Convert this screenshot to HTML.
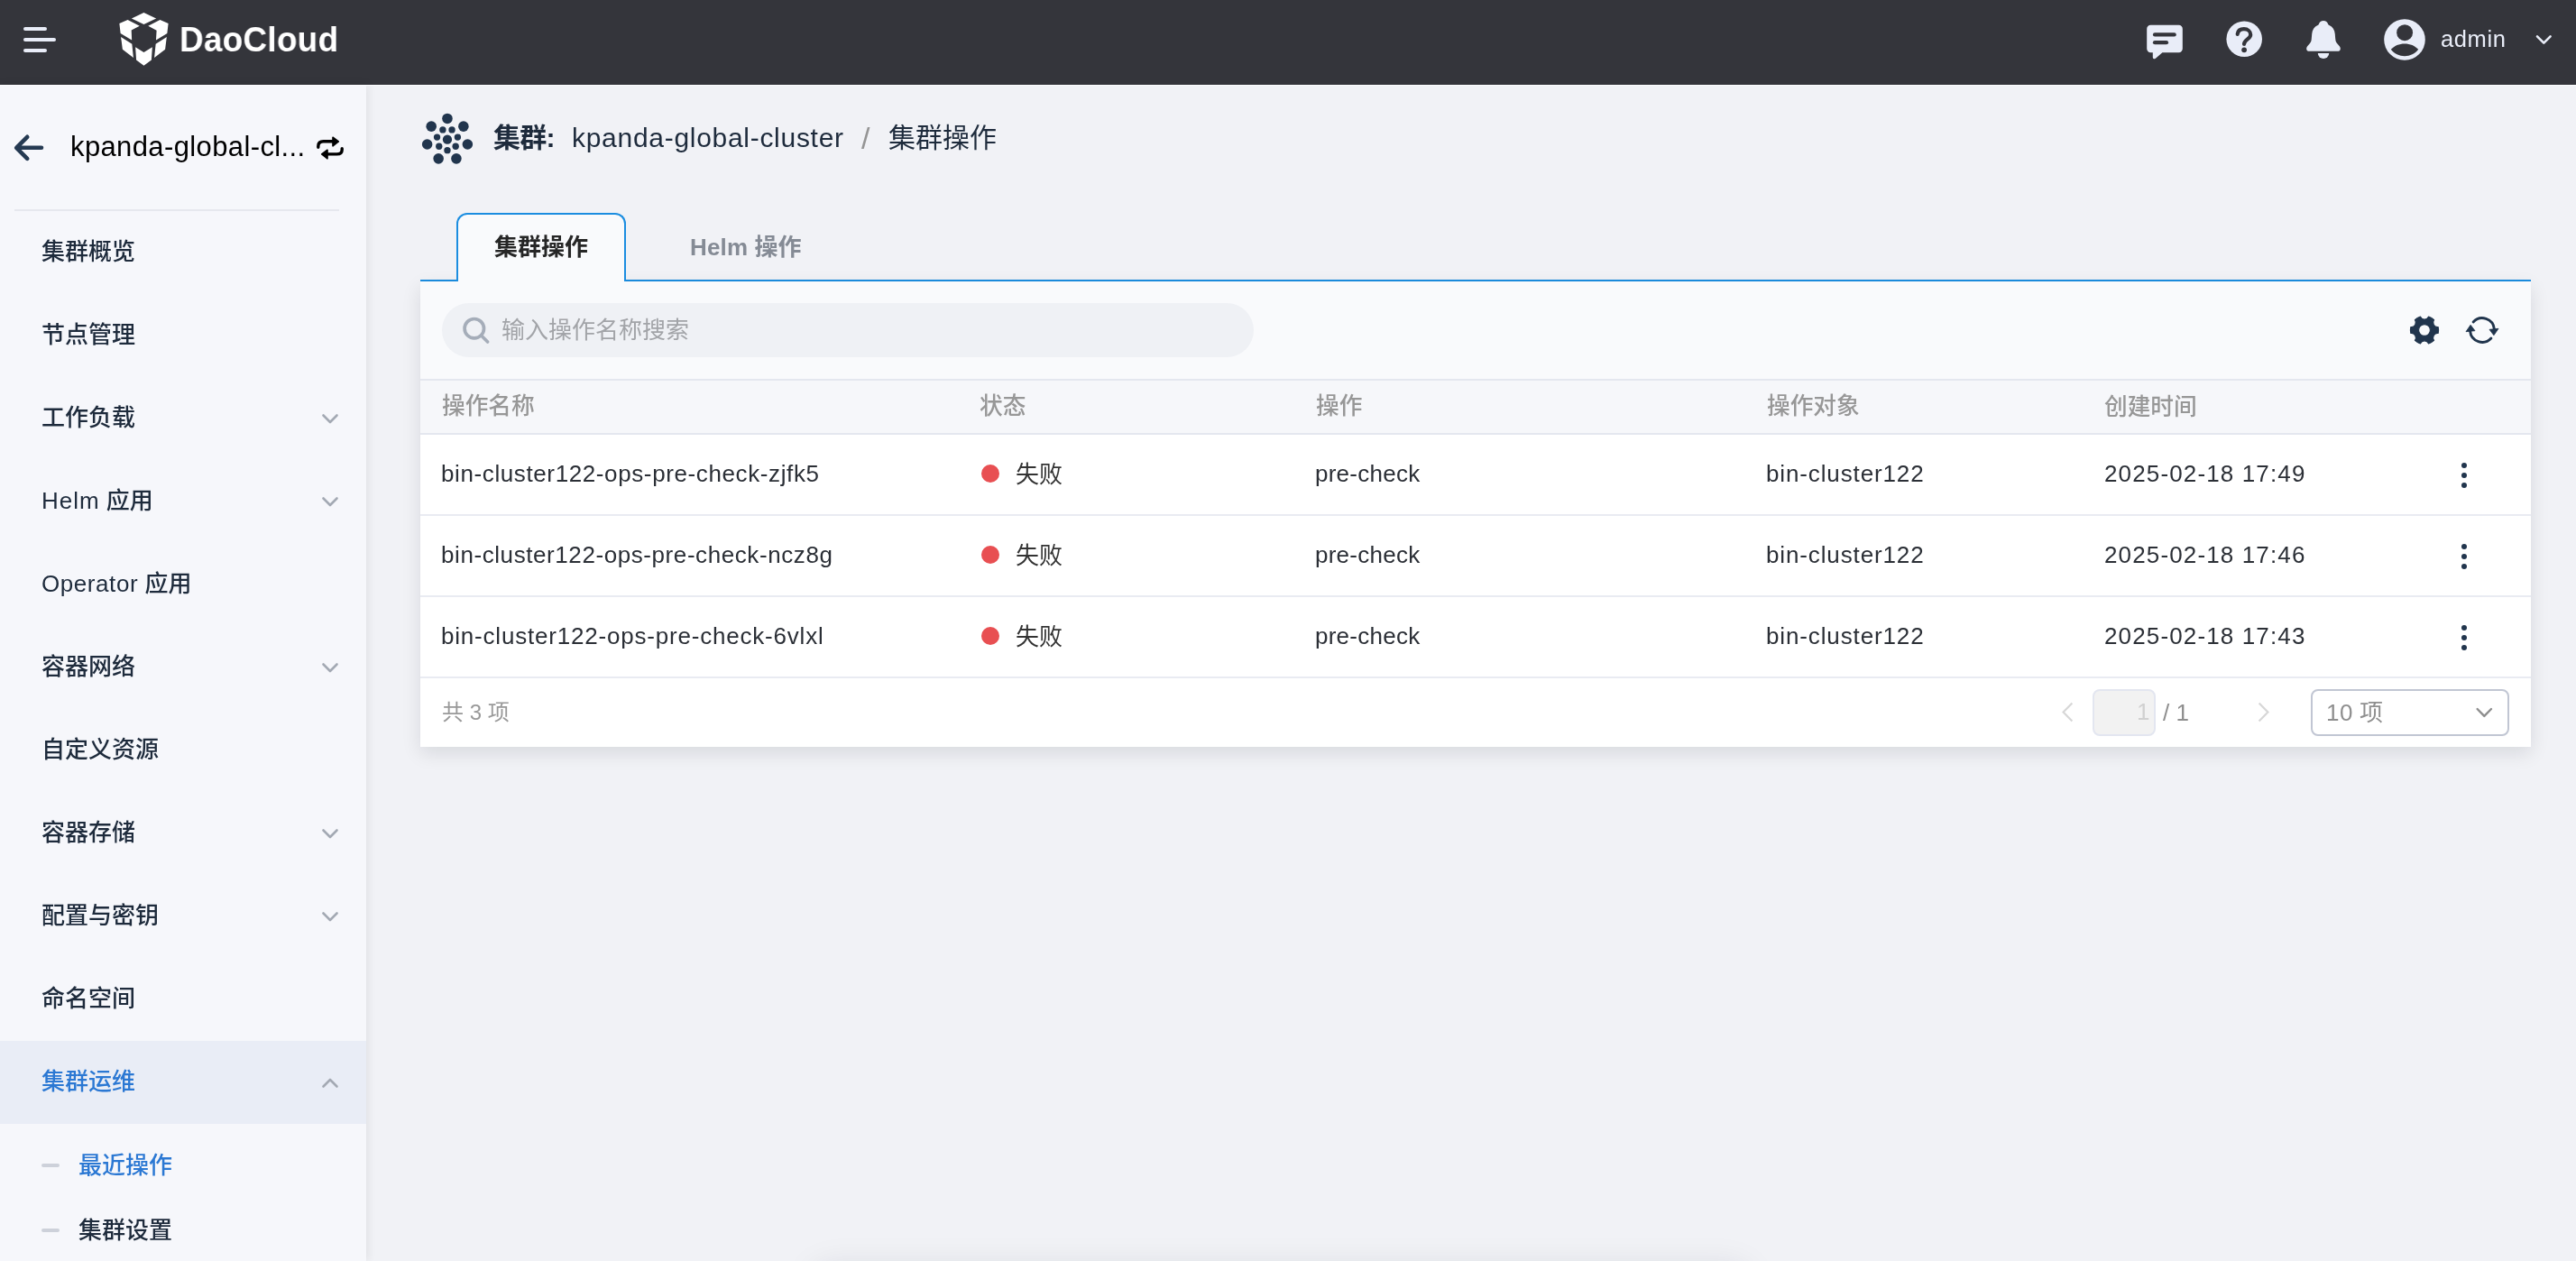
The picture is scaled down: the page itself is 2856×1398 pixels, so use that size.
<!DOCTYPE html>
<html lang="zh-CN">
<head>
<meta charset="utf-8">
<title>集群操作 - DaoCloud</title>
<style>
*{box-sizing:border-box;margin:0;padding:0}
html,body{width:2856px;height:1398px;overflow:hidden}
body{position:relative;background:#f1f2f6;font-family:"Liberation Sans","Noto Sans CJK SC",sans-serif;color:#1e2b3c}
.abs{position:absolute}
svg{display:block;overflow:visible}
.t{position:absolute;white-space:nowrap;line-height:40px;height:40px;will-change:transform}
#hdr{position:absolute;left:0;top:0;width:2856px;height:94px;background:#34353b}
#hl{position:absolute;left:0;top:94px;width:2856px;height:1.2px;background:#fcfcfe}
.bar{position:absolute;height:4.4px;border-radius:2.2px;background:#e9edf8;left:26px}
#side{position:absolute;left:0;top:94px;width:406px;height:1304px;background:#f6f7fb;box-shadow:1px 0 10px rgba(0,0,0,.09)}
#sdiv{position:absolute;left:16px;top:232px;width:360px;height:2px;background:#e6e8ee}
#act{position:absolute;left:0;top:1154px;width:406px;height:92px;background:#e9edf6}
.dash{position:absolute;left:46px;width:20px;height:4.4px;border-radius:2.2px;background:#cdd1da}
#card{position:absolute;left:466px;top:312px;width:2340px;height:516px;background:#fff;box-shadow:0 7px 20px rgba(10,15,30,.11)}
#bsh{position:absolute;left:900px;top:1404px;width:1040px;height:40px;border-radius:20px;box-shadow:0 0 36px rgba(20,30,50,.10)}
#tabline{position:absolute;left:466px;top:310px;width:2340px;height:2px;background:#1b8de0}
#tab1b{position:absolute;left:506px;top:236px;width:188px;height:76px;border:2px solid #1b8de0;border-bottom:none;border-radius:12px 12px 0 0;background:#f9fafc}
#tool{position:absolute;left:0;top:0;width:2340px;height:110px;background:#f9fafc;border-bottom:2px solid #e4e7ef}
#search{position:absolute;left:24px;top:24px;width:900px;height:60px;border-radius:30px;background:#eff1f5}
#thead{position:absolute;left:0;top:110px;width:2340px;height:60px;background:#f6f7fa;border-bottom:2px solid #e4e7ef}
.tr{position:absolute;left:0;width:2340px;height:90px;border-bottom:2px solid #e9ebf2;background:#fff}
.dot{position:absolute;left:621.8px;width:20.4px;height:20.4px;border-radius:50%;background:#e84f52}
#pgin{position:absolute;left:2320px;top:764px;width:70px;height:52px;border:2px solid #e3e6f0;border-radius:8px;background:#f2f2f2}
#selb{position:absolute;left:2562px;top:764px;width:220px;height:52px;border:2px solid #c1c6d3;border-radius:8px;background:#fff}
#brand{left:198.60px;top:24.00px;font-size:39px;font-weight:700;color:#fff;letter-spacing:0.31px;transform:scaleX(.945);transform-origin:0 50%}
#admin{left:2706.00px;top:23.15px;font-size:25.5px;font-weight:400;color:#e9edf8;letter-spacing:0.63px;}
#cname{left:77.50px;top:142.60px;font-size:31px;font-weight:400;color:#000;letter-spacing:0.38px;}
#m0{left:46.00px;top:259.20px;font-size:26px;font-weight:500;color:#1e2b3c;}
#m1{left:46.00px;top:351.20px;font-size:26px;font-weight:500;color:#1e2b3c;}
#m2{left:46.00px;top:443.20px;font-size:26px;font-weight:500;color:#1e2b3c;}
#m3{left:46.00px;top:535.20px;font-size:26px;font-weight:500;color:#1e2b3c;}
#m3 .ls{letter-spacing:0.97px}
#m4{left:46.00px;top:627.20px;font-size:26px;font-weight:500;color:#1e2b3c;}
#m4 .ls{letter-spacing:0.57px}
#m5{left:46.00px;top:719.20px;font-size:26px;font-weight:500;color:#1e2b3c;}
#m6{left:46.00px;top:811.20px;font-size:26px;font-weight:500;color:#1e2b3c;}
#m7{left:46.00px;top:903.20px;font-size:26px;font-weight:500;color:#1e2b3c;}
#m8{left:46.00px;top:995.20px;font-size:26px;font-weight:500;color:#1e2b3c;}
#m9{left:46.00px;top:1087.20px;font-size:26px;font-weight:500;color:#1e2b3c;}
#m10{left:46.00px;top:1179.20px;font-size:26px;font-weight:500;color:#2b78d3;}
#s1{left:86.50px;top:1272.30px;font-size:26px;font-weight:500;color:#2b78d3;}
#s2{left:86.50px;top:1344.15px;font-size:26px;font-weight:500;color:#1e2b3c;}
#bc1{left:546.50px;top:133.20px;font-size:30px;font-weight:700;color:#1e2b3c;letter-spacing:-0.72px;}
#bc2{left:634.00px;top:132.60px;font-size:30px;font-weight:400;color:#1e2b3c;letter-spacing:0.71px;}
#bc3{left:955.00px;top:132.70px;font-size:34px;font-weight:400;color:#959595;}
#bc4{left:985.00px;top:133.20px;font-size:30px;font-weight:400;color:#1e2b3c;}
#tab1{left:548.40px;top:253.70px;font-size:26px;font-weight:700;color:#262626;}
#tab2{left:765.20px;top:253.70px;font-size:26px;font-weight:700;color:#858b95;}
#tab2 .ls{letter-spacing:0.18px}
#ph{left:556.00px;top:346.30px;font-size:26px;font-weight:400;color:#a2a4a8;}
#th0{left:490.30px;top:430.45px;font-size:25.7px;font-weight:500;color:#979797;}
#th1{left:1086.10px;top:430.45px;font-size:25.7px;font-weight:500;color:#979797;}
#th2{left:1459.00px;top:430.45px;font-size:25.7px;font-weight:500;color:#979797;}
#th3{left:1959.00px;top:430.45px;font-size:25.7px;font-weight:500;color:#979797;}
#th4{left:2333.00px;top:430.95px;font-size:25.7px;font-weight:500;color:#979797;}
#n0{left:488.70px;top:505.10px;font-size:26px;font-weight:400;color:#2b2f36;letter-spacing:0.61px;}
#st0{left:1125.70px;top:505.90px;font-size:26px;font-weight:400;color:#333;}
#op0{left:1458.40px;top:505.10px;font-size:26px;font-weight:400;color:#2b2f36;letter-spacing:0.25px;}
#ob0{left:1958.40px;top:505.05px;font-size:26px;font-weight:400;color:#2b2f36;letter-spacing:0.87px;}
#dt0{left:2333.00px;top:505.00px;font-size:26px;font-weight:400;color:#2b2f36;letter-spacing:1.14px;}
#n1{left:488.70px;top:595.10px;font-size:26px;font-weight:400;color:#2b2f36;letter-spacing:0.58px;}
#st1{left:1125.70px;top:595.90px;font-size:26px;font-weight:400;color:#333;}
#op1{left:1458.40px;top:595.10px;font-size:26px;font-weight:400;color:#2b2f36;letter-spacing:0.25px;}
#ob1{left:1958.40px;top:595.05px;font-size:26px;font-weight:400;color:#2b2f36;letter-spacing:0.87px;}
#dt1{left:2333.00px;top:595.00px;font-size:26px;font-weight:400;color:#2b2f36;letter-spacing:1.14px;}
#n2{left:488.70px;top:685.10px;font-size:26px;font-weight:400;color:#2b2f36;letter-spacing:0.80px;}
#st2{left:1125.70px;top:685.90px;font-size:26px;font-weight:400;color:#333;}
#op2{left:1458.40px;top:685.10px;font-size:26px;font-weight:400;color:#2b2f36;letter-spacing:0.25px;}
#ob2{left:1958.40px;top:685.05px;font-size:26px;font-weight:400;color:#2b2f36;letter-spacing:0.87px;}
#dt2{left:2333.00px;top:685.00px;font-size:26px;font-weight:400;color:#2b2f36;letter-spacing:1.14px;}
#tot{left:489.70px;top:770.40px;font-size:24px;font-weight:400;color:#999;letter-spacing:0.04px;word-spacing:0px}
#pg1{left:2368.70px;top:769.15px;font-size:26px;font-weight:400;color:#d0d0d0;}
#pg2{left:2397.50px;top:769.50px;font-size:26px;font-weight:400;color:#8f8f8f;letter-spacing:0.00px;}
#sel{left:2578.50px;top:769.55px;font-size:26px;font-weight:400;color:#8f8f8f;}
#sel .ls{letter-spacing:0.45px}
</style>
</head>
<body>
<div id="hdr">
  <div class="bar" style="top:30px;width:26px"></div>
  <div class="bar" style="top:42px;width:36px"></div>
  <div class="bar" style="top:54px;width:26px"></div>
  <svg class="abs" style="left:120px;top:4px" width="80" height="80" viewBox="0 0 1261 1261" fill="#fff">
    <polygon points="622,158 838,262 622,362 408,262"/>
    <polygon points="195,348 340,285 548,392 405,465 412,640 215,520"/>
    <polygon points="1050,348 905,285 698,392 845,468 835,640 1030,520"/>
    <polygon points="222,585 415,705 440,945 250,800"/>
    <polygon points="1022,585 830,705 805,945 995,800"/>
    <polygon points="475,760 622,850 770,760 755,985 622,1085 490,985"/>
  </svg>
  <svg class="abs" style="left:2380px;top:27px" width="40" height="40" viewBox="0 0 40 40">
    <path fill="#e9edf8" d="M4.4 0.7H35.6a4.2 4.2 0 0 1 4.2 4.2V27a4.2 4.2 0 0 1-4.2 4.2H17.4L10.2 37.6a1.9 1.9 0 0 1-3.4-1.2V31.2H4.4A4.2 4.2 0 0 1 .2 27V4.9A4.2 4.2 0 0 1 4.4 .7z"/>
    <rect x="6.9" y="9.3" width="25.9" height="4.3" rx="2.15" fill="#34353b"/>
    <rect x="6.9" y="18" width="17.2" height="4.3" rx="2.15" fill="#34353b"/>
  </svg>
  <svg class="abs" style="left:2468px;top:23px" width="40" height="40" viewBox="-20 -20 40 40">
    <circle cx="0.2" cy="0.3" r="19.8" fill="#e9edf8"/>
    <path d="M-7.3 -5.2C-6.8 -8.9 -3.8 -10.8 -0.2 -10.8C4.1 -10.8 7.2 -8.1 7.2 -4.5C7.2 0.2 0.3 0.6 0 5.9" fill="none" stroke="#34353b" stroke-width="4.2" stroke-linecap="round"/>
    <circle cx="0.1" cy="12.3" r="2.9" fill="#34353b"/>
  </svg>
  <svg class="abs" style="left:2556px;top:0px" width="40" height="70" viewBox="-20 0 40 70" fill="#e9edf8">
    <path d="M0 23.1C2.6 23.1 4.6 24.7 5.1 26.7C5.3 27.4 5.7 27.8 6.4 28.1C10.2 29.8 12.4 33.2 12.8 37.8C13 40.5 13.1 42 13.3 43.5C13.5 45.6 13.9 46.8 15 48L17.6 51C19.8 53.5 18.9 56.85 16 56.85H-16C-18.9 56.85 -19.8 53.5 -17.6 51L-15 48C-13.9 46.8 -13.5 45.6 -13.3 43.5C-13.1 42 -13 40.5 -12.8 37.8C-12.4 33.2 -10.2 29.8 -6.4 28.1C-5.7 27.8 -5.3 27.4 -5.1 26.7C-4.6 24.7 -2.6 23.1 0 23.1Z"/>
    <path d="M-6.2 58.9H6.2A6.2 6 0 0 1 -6.2 58.9Z"/>
  </svg>
  <svg class="abs" style="left:2643px;top:21px" width="46" height="46" viewBox="-23 -23 46 46">
    <circle cx="0" cy="0" r="22.8" fill="#e9edf8"/>
    <circle cx="0.1" cy="-7.8" r="8.95" fill="#34353b"/>
    <path d="M-15.2 10.8C-11.5 6.6 -6 4.4 0 4.4C6 4.4 11.5 6.6 15.2 10.8C11.5 15.5 6 18.3 0 18.3C-6 18.3 -11.5 15.5 -15.2 10.8Z" fill="#34353b"/>
  </svg>
  <svg class="abs" style="left:2810px;top:36px" width="20" height="16" viewBox="0 0 20 16" fill="none" stroke="#e9edf8" stroke-width="2.6" stroke-linecap="round" stroke-linejoin="round"><path d="M3 4.4L10.3 11.7L17.6 4.4"/></svg>
</div>
<div id="side"></div>
<div id="hl"></div>
<div id="sdiv"></div>
<div id="act"></div>
<svg class="abs" style="left:0;top:140px" width="400" height="48" viewBox="0 140 400 48">
  <path d="M46 163.8H18.6M30.2 151.8L18.2 163.8L30.2 175.8" fill="none" stroke="#253a52" stroke-width="4.6" stroke-linecap="round" stroke-linejoin="round"/>
  <g fill="none" stroke="#000" stroke-width="3.4" stroke-linecap="round" stroke-linejoin="round">
    <path d="M352.8 163.3V162.2Q352.8 156.8 358.6 156.8H369"/>
    <path d="M379.2 164.8V165.9Q379.2 170.9 373.4 170.9H363"/>
  </g>
  <g fill="#000" stroke="#000" stroke-width="1.6" stroke-linejoin="round">
    <path d="M369 152.2L375.3 156.9L369 161.8Z"/>
    <path d="M363 166.2L356.7 170.9L363 175.8Z"/>
  </g>
</svg>
<svg class="abs" style="left:357px;top:458.5px" width="18" height="11" viewBox="0 0 18 11" fill="none" stroke="#a3a9b3" stroke-width="2.6" stroke-linecap="round" stroke-linejoin="round"><path d="M1.5 1.5L9 9L16.5 1.5"/></svg>
<svg class="abs" style="left:357px;top:550.5px" width="18" height="11" viewBox="0 0 18 11" fill="none" stroke="#a3a9b3" stroke-width="2.6" stroke-linecap="round" stroke-linejoin="round"><path d="M1.5 1.5L9 9L16.5 1.5"/></svg>
<svg class="abs" style="left:357px;top:734.5px" width="18" height="11" viewBox="0 0 18 11" fill="none" stroke="#a3a9b3" stroke-width="2.6" stroke-linecap="round" stroke-linejoin="round"><path d="M1.5 1.5L9 9L16.5 1.5"/></svg>
<svg class="abs" style="left:357px;top:918.5px" width="18" height="11" viewBox="0 0 18 11" fill="none" stroke="#a3a9b3" stroke-width="2.6" stroke-linecap="round" stroke-linejoin="round"><path d="M1.5 1.5L9 9L16.5 1.5"/></svg>
<svg class="abs" style="left:357px;top:1010.5px" width="18" height="11" viewBox="0 0 18 11" fill="none" stroke="#a3a9b3" stroke-width="2.6" stroke-linecap="round" stroke-linejoin="round"><path d="M1.5 1.5L9 9L16.5 1.5"/></svg>
<svg class="abs" style="left:357px;top:1194.5px" width="18" height="11" viewBox="0 0 18 11" fill="none" stroke="#a3a9b3" stroke-width="2.6" stroke-linecap="round" stroke-linejoin="round"><path d="M1.5 9.5L9 2L16.5 9.5"/></svg>
<div class="dash" style="top:1289.8px"></div>
<div class="dash" style="top:1361.8px"></div>
<svg class="abs" style="left:456px;top:114px" width="80" height="80" viewBox="0 0 1261 1261" fill="#21354d"><circle cx="630" cy="275" r="91"/><circle cx="350" cy="412" r="91"/><circle cx="912" cy="412" r="91"/><circle cx="278" cy="725" r="91"/><circle cx="983" cy="725" r="91"/><circle cx="475" cy="975" r="91"/><circle cx="787" cy="975" r="91"/><circle cx="630" cy="642" r="81"/><circle cx="550" cy="472" r="58"/><circle cx="710" cy="472" r="58"/><circle cx="450" cy="600" r="58"/><circle cx="810" cy="600" r="58"/><circle cx="485" cy="760" r="58"/><circle cx="775" cy="760" r="58"/><circle cx="630" cy="830" r="58"/></svg>
<div id="bsh"></div>
<div id="tabline"></div>
<div id="card">
<div id="tool">
<div id="search"><svg class="abs" style="left:20px;top:12px" width="36" height="36" viewBox="510 348 36 36" fill="none" stroke="#a5adb9" stroke-width="3.7" stroke-linecap="round"><circle cx="525.8" cy="364.2" r="10.7"/><path d="M533.6 372L540.6 379"/></svg></div>
<svg class="abs" style="left:2202px;top:34.2px" width="40" height="40" viewBox="-20 -20 40 40"><path fill="#21354d" stroke="#21354d" stroke-width="1.1" stroke-linejoin="round" fill-rule="evenodd" d="M15.21 -3.47A15.6 15.6 0 0 1 15.21 3.47A5.0 5.0 0 0 0 10.61 11.44A15.6 15.6 0 0 1 4.60 14.91A5.0 5.0 0 0 0 -4.60 14.91A15.6 15.6 0 0 1 -10.61 11.44A5.0 5.0 0 0 0 -15.21 3.47A15.6 15.6 0 0 1 -15.21 -3.47A5.0 5.0 0 0 0 -10.61 -11.44A15.6 15.6 0 0 1 -4.60 -14.91A5.0 5.0 0 0 0 4.60 -14.91A15.6 15.6 0 0 1 10.61 -11.44A5.0 5.0 0 0 0 15.21 -3.47ZM6.4 0A6.4 6.4 0 1 0 -6.4 0A6.4 6.4 0 1 0 6.4 0Z"/></svg>
<svg class="abs" style="left:2266px;top:34px" width="40" height="40" viewBox="-20 -20 40 40"><g fill="none" stroke="#21354d" stroke-width="2.9" stroke-linecap="round"><path d="M-9.9 -9.1A13.5 13.5 0 0 1 13.4 -1.2"/><path d="M9.9 9.1A13.5 13.5 0 0 1 -13.4 1.2"/></g><g fill="#21354d" stroke="#21354d" stroke-width="0.8" stroke-linejoin="round"><path d="M8 -0.7L18 -1.7L12.9 5.7Z"/><path d="M-8 0.7L-18 1.7L-12.9 -5.7Z"/></g></svg>
</div>
<div id="thead"></div>
<div class="tr" style="top:170px"><div class="dot" style="top:32.9px"></div><svg class="abs" style="left:2262px;top:30px" width="8" height="30" viewBox="0 0 8 30" fill="#21354d"><circle cx="4" cy="4" r="3"/><circle cx="4" cy="15" r="3"/><circle cx="4" cy="26" r="3"/></svg></div>
<div class="tr" style="top:260px"><div class="dot" style="top:32.9px"></div><svg class="abs" style="left:2262px;top:30px" width="8" height="30" viewBox="0 0 8 30" fill="#21354d"><circle cx="4" cy="4" r="3"/><circle cx="4" cy="15" r="3"/><circle cx="4" cy="26" r="3"/></svg></div>
<div class="tr" style="top:350px"><div class="dot" style="top:32.9px"></div><svg class="abs" style="left:2262px;top:30px" width="8" height="30" viewBox="0 0 8 30" fill="#21354d"><circle cx="4" cy="4" r="3"/><circle cx="4" cy="15" r="3"/><circle cx="4" cy="26" r="3"/></svg></div>
</div>
<div id="tab1b"></div>
<svg class="abs" style="left:2285px;top:778px" width="14" height="23" viewBox="0 0 14 23" fill="none" stroke="#d7d7d7" stroke-width="2.2"><path d="M12.4 1.6L2.6 11.5L12.4 21.4"/></svg>
<div id="pgin"></div>
<svg class="abs" style="left:2503px;top:778px" width="14" height="23" viewBox="0 0 14 23" fill="none" stroke="#d7d7d7" stroke-width="2.2"><path d="M1.6 1.6L11.4 11.5L1.6 21.4"/></svg>
<div id="selb"></div>
<svg class="abs" style="left:2744px;top:783px" width="20" height="14" viewBox="0 0 20 14" fill="none" stroke="#8e8e8e" stroke-width="2.4" stroke-linecap="round" stroke-linejoin="round"><path d="M2.6 3L10.3 10.9L18 3"/></svg>
<div class="t" id="brand">DaoCloud</div>
<div class="t" id="admin">admin</div>
<div class="t" id="cname">kpanda-global-cl...</div>
<div class="t" id="m0">集群概览</div>
<div class="t" id="m1">节点管理</div>
<div class="t" id="m2">工作负载</div>
<div class="t" id="m3"><span class="ls">Helm</span> 应用</div>
<div class="t" id="m4"><span class="ls">Operator</span> 应用</div>
<div class="t" id="m5">容器网络</div>
<div class="t" id="m6">自定义资源</div>
<div class="t" id="m7">容器存储</div>
<div class="t" id="m8">配置与密钥</div>
<div class="t" id="m9">命名空间</div>
<div class="t" id="m10">集群运维</div>
<div class="t" id="s1">最近操作</div>
<div class="t" id="s2">集群设置</div>
<div class="t" id="bc1">集群:</div>
<div class="t" id="bc2">kpanda-global-cluster</div>
<div class="t" id="bc3">/</div>
<div class="t" id="bc4">集群操作</div>
<div class="t" id="tab1">集群操作</div>
<div class="t" id="tab2"><span class="ls">Helm</span> 操作</div>
<div class="t" id="ph">输入操作名称搜索</div>
<div class="t" id="th0">操作名称</div>
<div class="t" id="th1">状态</div>
<div class="t" id="th2">操作</div>
<div class="t" id="th3">操作对象</div>
<div class="t" id="th4">创建时间</div>
<div class="t" id="n0">bin-cluster122-ops-pre-check-zjfk5</div>
<div class="t" id="st0">失败</div>
<div class="t" id="op0">pre-check</div>
<div class="t" id="ob0">bin-cluster122</div>
<div class="t" id="dt0">2025-02-18 17:49</div>
<div class="t" id="n1">bin-cluster122-ops-pre-check-ncz8g</div>
<div class="t" id="st1">失败</div>
<div class="t" id="op1">pre-check</div>
<div class="t" id="ob1">bin-cluster122</div>
<div class="t" id="dt1">2025-02-18 17:46</div>
<div class="t" id="n2">bin-cluster122-ops-pre-check-6vlxl</div>
<div class="t" id="st2">失败</div>
<div class="t" id="op2">pre-check</div>
<div class="t" id="ob2">bin-cluster122</div>
<div class="t" id="dt2">2025-02-18 17:43</div>
<div class="t" id="tot">共 3 项</div>
<div class="t" id="pg1">1</div>
<div class="t" id="pg2">/ 1</div>
<div class="t" id="sel"><span class="ls">10</span> 项</div>
</body>
</html>
